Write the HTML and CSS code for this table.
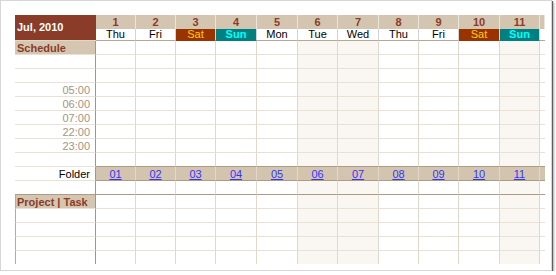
FILE: index.html
```html
<!DOCTYPE html>
<html>
<head>
<meta charset="utf-8">
<link rel="stylesheet" href="styles.css">
</head>
<body>
<div class="frame">
  <div class="head cols">
    <div class="month">Jul, 2010</div>
    <div class="num">1</div><div class="num">2</div><div class="num">3</div><div class="num">4</div><div class="num">5</div><div class="num">6</div><div class="num">7</div><div class="num">8</div><div class="num">9</div><div class="num">10</div><div class="num">11</div><div class="num"></div>
    <div class="day">Thu</div><div class="day">Fri</div><div class="day sat">Sat</div><div class="day sun">Sun</div><div class="day">Mon</div><div class="day">Tue</div><div class="day">Wed</div><div class="day">Thu</div><div class="day">Fri</div><div class="day sat">Sat</div><div class="day sun">Sun</div><div class="day"></div>
  </div>
  <div class="row cols"><div class="lbl sect">Schedule</div><i></i><i></i><i></i><i></i><i></i><i></i><i></i><i></i><i></i><i></i><i></i><i></i></div>
  <div class="row cols"><div class="lbl"></div><i></i><i></i><i></i><i></i><i></i><i></i><i></i><i></i><i></i><i></i><i></i><i></i></div>
  <div class="row cols"><div class="lbl"></div><i></i><i></i><i></i><i></i><i></i><i></i><i></i><i></i><i></i><i></i><i></i><i></i></div>
  <div class="row cols"><div class="lbl time">05:00</div><i></i><i></i><i></i><i></i><i></i><i></i><i></i><i></i><i></i><i></i><i></i><i></i></div>
  <div class="row cols"><div class="lbl time">06:00</div><i></i><i></i><i></i><i></i><i></i><i></i><i></i><i></i><i></i><i></i><i></i><i></i></div>
  <div class="row cols"><div class="lbl time">07:00</div><i></i><i></i><i></i><i></i><i></i><i></i><i></i><i></i><i></i><i></i><i></i><i></i></div>
  <div class="row cols"><div class="lbl time">22:00</div><i></i><i></i><i></i><i></i><i></i><i></i><i></i><i></i><i></i><i></i><i></i><i></i></div>
  <div class="row cols"><div class="lbl time">23:00</div><i></i><i></i><i></i><i></i><i></i><i></i><i></i><i></i><i></i><i></i><i></i><i></i></div>
  <div class="row cols thick"><div class="lbl"></div><i></i><i></i><i></i><i></i><i></i><i></i><i></i><i></i><i></i><i></i><i></i><i></i></div>
  <div class="row cols thick folder"><div class="lbl folder-lbl">Folder</div><i><a href="#">01</a></i><i><a href="#">02</a></i><i><a href="#">03</a></i><i><a href="#">04</a></i><i><a href="#">05</a></i><i><a href="#">06</a></i><i><a href="#">07</a></i><i><a href="#">08</a></i><i><a href="#">09</a></i><i><a href="#">10</a></i><i><a href="#">11</a></i><i></i></div>
  <div class="row cols thick all"><div class="lbl"></div><i></i><i></i><i></i><i></i><i></i><i></i><i></i><i></i><i></i><i></i><i></i><i></i></div>
  <div class="row cols proj"><div class="lbl sect">Project | Task</div><i></i><i></i><i></i><i></i><i></i><i></i><i></i><i></i><i></i><i></i><i></i><i></i></div>
  <div class="row cols proj"><div class="lbl"></div><i></i><i></i><i></i><i></i><i></i><i></i><i></i><i></i><i></i><i></i><i></i><i></i></div>
  <div class="row cols proj"><div class="lbl"></div><i></i><i></i><i></i><i></i><i></i><i></i><i></i><i></i><i></i><i></i><i></i><i></i></div>
  <div class="row cols proj"><div class="lbl"></div><i></i><i></i><i></i><i></i><i></i><i></i><i></i><i></i><i></i><i></i><i></i><i></i></div>
  <div class="row cols proj last"><div class="lbl"></div><i></i><i></i><i></i><i></i><i></i><i></i><i></i><i></i><i></i><i></i><i></i><i></i></div>
</div>
</body>
</html>
```
FILE: styles.css
```css
body {
  margin: 0;
  background: #ffffff;
  font-family: "Liberation Sans", Arial, sans-serif;
  font-size: 11px;
}

.frame {
  box-sizing: border-box;
  width: 552px;
  height: 271px;
  border: 1px solid #d6d6d6;
  padding: 14px 0 0 14px;
  background: #ffffff;
  box-shadow: 1px 1px 0 #5e5e5e, 2px 2px 2px rgba(0, 0, 0, 0.35);
}

.cols {
  display: grid;
  grid-template-columns: 81px 40px 40px 40px 41px 41px 40px 41px 40px 40px 41px 40px 5px;
}

/* header */
.head {
  grid-template-rows: 14px 12px;
}

.head > div {
  box-sizing: border-box;
  text-align: center;
  white-space: nowrap;
  overflow: hidden;
}

.month {
  grid-row: span 2;
  background: #8a3c28;
  color: #ffffff;
  font-weight: bold;
  text-align: left !important;
  padding-left: 2px;
  line-height: 25px;
  border-bottom: 1px solid #e2d8ca;
}

.num {
  background: #d4c5b0;
  color: #8a3c28;
  font-weight: bold;
  line-height: 14px;
  border-right: 1px solid #ece5da;
}

.num:last-child {
  border-right: 0;
}

.day {
  background: #ffffff;
  color: #000000;
  line-height: 11px;
  border-right: 1px solid #d4d4d4;
  border-bottom: 1px solid #b6a692;
}

.day:last-child {
  border-right: 0;
}

.day.sat {
  background: #993300;
  color: #ffcc00;
  border-bottom-color: #993300;
}

.day.sun {
  background: #008080;
  color: #00ffff;
  font-weight: bold;
  border-bottom-color: #008080;
}

/* body rows */
.row {
  height: 14px;
}

.row > * {
  box-sizing: border-box;
  display: block;
  border-right: 1px solid #e2d8ca;
  border-bottom: 1px solid #e9e1d5;
  font-style: normal;
  line-height: 14px;
  text-align: center;
  white-space: nowrap;
  overflow: hidden;
}

.row > :last-child {
  border-right: 0;
}

.row > :nth-child(7),
.row > :nth-child(8),
.row > :nth-child(12) {
  background: #faf7f2;
}

.row > .lbl {
  border-right: 1px solid #a8937c;
  padding: 0 2px;
  text-align: left;
  background: #ffffff;
}

.lbl.sect {
  background: #d5c6b1;
  color: #8a3c28;
  font-weight: bold;
}

.lbl.time {
  text-align: right;
  padding-right: 5px;
  color: #a39482;
}

.lbl.folder-lbl {
  text-align: right;
  padding-right: 5px;
  color: #000000;
}

.thick > i {
  border-bottom-color: #ad9b86;
}

.thick.all > .lbl {
  border-bottom-color: #ad9b86;
}

.row.folder > i {
  background: #d3c4af;
  border-right-color: #e2d8ca;
}

.row.folder > i:last-child {
  border-right: 0;
}

.row.folder a {
  color: #3535f2;
  text-decoration: underline;
}

.proj > .lbl {
  border-left: 1px solid #bba893;
  padding-left: 1px;
}

.row.last {
  height: 13px;
}

.row.last > * {
  border-bottom: 0;
}
```
